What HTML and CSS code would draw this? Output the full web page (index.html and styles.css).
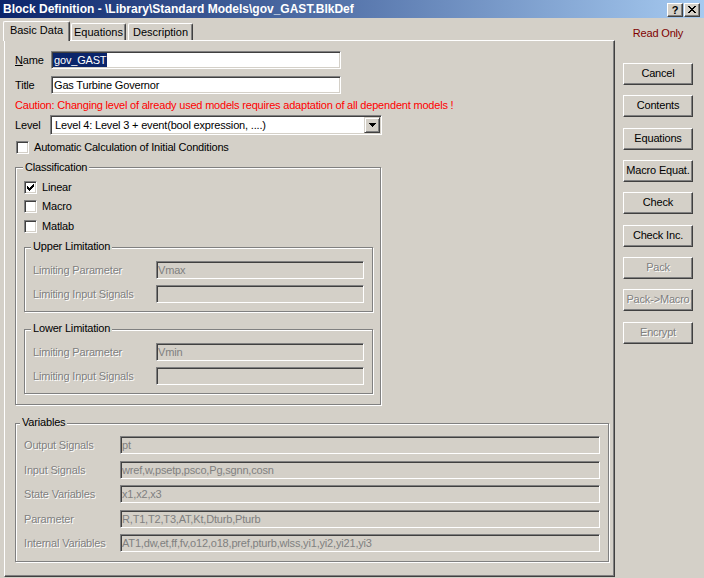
FILE: index.html
```html
<!DOCTYPE html>
<html>
<head>
<meta charset="utf-8">
<title>Block Definition</title>
<link rel="stylesheet" href="styles.css">
</head>
<body>
<div class="window">
  <div class="titlebar">
    <span class="caption">Block Definition - \Library\Standard Models\gov_GAST.BlkDef</span>
    <div class="capbtns">
      <span class="capbtn">?</span>
      <span class="capbtn"><svg width="8" height="7" viewBox="0 0 8 7" shape-rendering="crispEdges"><path fill="#000" d="M0 0h2v1h-2z M6 0h2v1h-2z M1 1h2v1h-2z M5 1h2v1h-2z M2 2h4v1h-4z M3 3h2v1h-2z M2 4h4v1h-4z M1 5h2v1h-2z M5 5h2v1h-2z M0 6h2v1h-2z M6 6h2v1h-2z"/></svg></span>
    </div>
  </div>
  <div class="main">
    <div class="tabarea">
      <div class="tabstrip">
        <div class="tab tab-active">Basic Data</div>
        <div class="tab tab-eq">Equations</div>
        <div class="tab tab-desc">Description</div>
      </div>
      <div class="panel">
        <div class="row">
          <span class="lbl lbl-name"><u>N</u>ame</span>
          <div class="field field-top"><span class="hl">gov_GAST</span></div>
        </div>
        <div class="row row-title">
          <span class="lbl lbl-name">Title</span>
          <div class="field field-top">Gas Turbine Governor</div>
        </div>
        <div class="caution">Caution: Changing level of already used models requires adaptation of all dependent models !</div>
        <div class="row row-level">
          <span class="lbl lbl-level">Level</span>
          <div class="combo">
            <span class="combo-text">Level 4: Level 3 + event(bool expression, ....)</span>
            <span class="combo-btn"><svg width="7" height="4" viewBox="0 0 7 4" shape-rendering="crispEdges"><path fill="#000" d="M0 0h7v1h-7z M1 1h5v1h-5z M2 2h3v1h-3z M3 3h1v1h-1z"/></svg></span>
          </div>
        </div>
        <div class="cbrow cbrow-auto"><span class="cb"></span><span>Automatic Calculation of Initial Conditions</span></div>

        <div class="group group-class">
          <span class="legend">Classification</span>
          <div class="cbrow cbrow-first"><span class="cb"><svg width="7" height="7" viewBox="0 0 7 7" shape-rendering="crispEdges"><path fill="#000" d="M0 2h1v3h-1z M1 3h1v3h-1z M2 4h1v3h-1z M3 3h1v3h-1z M4 2h1v3h-1z M5 1h1v3h-1z M6 0h1v3h-1z"/></svg></span><span>Linear</span></div>
          <div class="cbrow cbrow-mid"><span class="cb"></span><span>Macro</span></div>
          <div class="cbrow cbrow-last"><span class="cb"></span><span>Matlab</span></div>

          <div class="group group-limit">
            <span class="legend legend-limit">Upper Limitation</span>
            <div class="row limrow limrow-first"><span class="lbl dis lbl-lim">Limiting Parameter</span><div class="field field-dis">Vmax</div></div>
            <div class="row limrow"><span class="lbl dis lbl-lim">Limiting Input Signals</span><div class="field field-dis"></div></div>
          </div>

          <div class="group group-limit group-lower">
            <span class="legend legend-limit">Lower Limitation</span>
            <div class="row limrow limrow-first"><span class="lbl dis lbl-lim">Limiting Parameter</span><div class="field field-dis">Vmin</div></div>
            <div class="row limrow"><span class="lbl dis lbl-lim">Limiting Input Signals</span><div class="field field-dis"></div></div>
          </div>
        </div>

        <div class="group group-var">
          <span class="legend legend-var">Variables</span>
          <div class="vrows">
            <div class="row"><span class="lbl dis lbl-var">Output Signals</span><div class="field field-dis">pt</div></div>
            <div class="row"><span class="lbl dis lbl-var">Input Signals</span><div class="field field-dis">wref,w,psetp,psco,Pg,sgnn,cosn</div></div>
            <div class="row"><span class="lbl dis lbl-var">State Variables</span><div class="field field-dis">x1,x2,x3</div></div>
            <div class="row"><span class="lbl dis lbl-var">Parameter</span><div class="field field-dis">R,T1,T2,T3,AT,Kt,Dturb,Pturb</div></div>
            <div class="row"><span class="lbl dis lbl-var">Internal Variables</span><div class="field field-dis">AT1,dw,et,ff,fv,o12,o18,pref,pturb,wlss,yi1,yi2,yi21,yi3</div></div>
          </div>
        </div>
      </div>
    </div>
    <div class="side">
      <div class="readonly">Read Only</div>
      <div class="btns">
        <div class="btn">Cancel</div>
        <div class="btn">Contents</div>
        <div class="btn">Equations</div>
        <div class="btn">Macro Equat.</div>
        <div class="btn">Check</div>
        <div class="btn">Check Inc.</div>
        <div class="btn btn-dis">Pack</div>
        <div class="btn btn-dis">Pack-&gt;Macro</div>
        <div class="btn btn-dis">Encrypt</div>
      </div>
    </div>
  </div>
</div>
</body>
</html>
```
FILE: styles.css
```css
* { box-sizing: border-box; }
html, body { margin: 0; padding: 0; }
body {
  width: 704px;
  height: 578px;
  overflow: hidden;
  background: #D4D0C8;
  font-family: "Liberation Sans", Arial, sans-serif;
  font-size: 11px;
  letter-spacing: -0.18px;
  color: #000;
}
.window {
  width: 704px;
  height: 578px;
  display: flex;
  flex-direction: column;
  background: #D4D0C8;
}

/* title bar */
.titlebar {
  height: 18px;
  flex: none;
  display: flex;
  align-items: center;
  padding: 0 4px 0 3px;
  background: linear-gradient(to right, #0A246A, #A6CAF0);
  color: #fff;
  font-weight: bold;
  font-size: 12px;
  letter-spacing: 0;
  line-height: 18px;
  white-space: nowrap;
}
.capbtns { margin-left: auto; display: flex; gap: 1px; margin-top: 1px; }
.capbtn {
  width: 16px;
  height: 14px;
  background: #D4D0C8;
  border: 1px solid;
  border-color: #fff #404040 #404040 #fff;
  box-shadow: inset -1px -1px #808080;
  display: flex;
  align-items: center;
  justify-content: center;
  color: #000;
  font-size: 11px;
  font-weight: bold;
  line-height: 12px;
}

.main { display: flex; flex: 1; }

/* tabs */
.tabarea { margin-left: 4px; width: 611px; display: flex; flex-direction: column; flex: none; }
.tabstrip { height: 22px; display: flex; align-items: flex-end; flex: none; }
.tab {
  height: 17px;
  border: 1px solid;
  border-bottom: none;
  border-color: #fff #404040 #404040 #fff;
  box-shadow: inset -1px 0 #808080;
  border-radius: 2px 2px 0 0;
  text-align: center;
  line-height: 16px;
  white-space: nowrap;
  letter-spacing: 0;
}
.tab-active {
  position: relative;
  z-index: 1;
  width: 67px;
  height: 20px;
  margin-left: -1px;
  margin-bottom: -1px;
  background: #D4D0C8;
  line-height: 16px;
}
.tab-eq { width: 55px; margin-left: 1px; }
.tab-desc { width: 65px; margin-left: 2px; }

.panel {
  width: 611px;
  height: 537px;
  border: 1px solid;
  border-color: #fff #404040 #404040 #fff;
  box-shadow: inset -1px -1px #808080;
  padding: 10px 0 0 10px;
  display: flex;
  flex-direction: column;
  align-items: flex-start;
}

/* rows & fields */
.row { display: flex; align-items: center; }
.lbl { white-space: nowrap; flex: none; }
.lbl-name { width: 36px; }
.lbl-level { width: 35px; }
.row-title { margin-top: 7px; }
.dis { color: #808080; text-shadow: 1px 1px 0 #fff; }

.field {
  height: 18px;
  background: #fff;
  border: 1px solid;
  border-color: #808080 #fff #fff #808080;
  box-shadow: inset 1px 1px #404040, inset -1px -1px #D4D0C8;
  padding: 0 2px;
  line-height: 16px;
  white-space: nowrap;
  overflow: hidden;
}
.field-top { width: 290px; }
.hl {
  display: inline-block;
  background: #0A246A;
  color: #fff;
  margin-left: -1px;
  padding: 0 1px;
  line-height: 14px;
  vertical-align: top;
  margin-top: 1px;
}
.field-dis {
  flex: 1;
  background: #D4D0C8;
  color: #808080;
  padding: 0 1px;
}

.caution {
  margin-top: 5px;
  color: #FF0000;
  line-height: 13px;
  white-space: nowrap;
  letter-spacing: -0.2px;
}
.row-level { margin-top: 3px; }
.combo {
  width: 332px;
  height: 20px;
  background: #fff;
  border: 1px solid;
  border-color: #808080 #fff #fff #808080;
  box-shadow: inset 1px 1px #404040, inset -1px -1px #D4D0C8;
  padding: 1px;
  display: flex;
  align-items: center;
}
.combo-text { flex: 1; padding-left: 3px; line-height: 16px; white-space: nowrap; }
.combo-btn {
  width: 16px;
  height: 16px;
  background: #D4D0C8;
  border: 1px solid;
  border-color: #D4D0C8 #404040 #404040 #D4D0C8;
  box-shadow: inset 1px 1px #fff, inset -1px -1px #808080;
  display: flex;
  align-items: center;
  justify-content: center;
}

/* checkboxes */
.cbrow { display: flex; align-items: center; line-height: 13px; white-space: nowrap; }
.cb {
  width: 13px;
  height: 13px;
  flex: none;
  background: #fff;
  border: 1px solid;
  border-color: #808080 #fff #fff #808080;
  box-shadow: inset 1px 1px #404040, inset -1px -1px #D4D0C8;
  margin-right: 5px;
  display: flex;
  align-items: center;
  justify-content: center;
}
.cbrow-auto { margin-top: 6px; margin-left: 1px; }
.cbrow-first { margin-top: 8px; }
.cbrow-mid { margin-top: 6px; }
.cbrow-last { margin-top: 7px; }

/* group boxes */
.group {
  border: 1px solid #808080;
  box-shadow: inset 1px 1px #fff, 1px 1px #fff;
  display: flex;
  flex-direction: column;
  align-items: flex-start;
  padding: 0 8px 8px 8px;
  flex: none;
}
.legend {
  background: #D4D0C8;
  line-height: 13px;
  padding: 0 2px;
  margin: -7px 0 0 -1px;
  white-space: nowrap;
}
.group-class { margin-top: 13px; width: 366px; padding-bottom: 10px; padding-right: 7px; }
.group-class > .cbrow-first { margin-top: 7px; }
.group-limit { margin-top: 14px; width: 349px; align-self: flex-start; }
.group-lower { margin-top: 17px; }
.legend-limit { margin-left: -2px; margin-top: -8px; }
.limrow { align-self: stretch; margin-top: 6px; }
.limrow-first { margin-top: 8px; }
.lbl-lim { width: 123px; }

.group-var { margin-top: 18px; width: 594px; padding-bottom: 9px; }
.legend-var { margin-left: -4px; margin-top: -8px; }
.vrows {
  align-self: stretch;
  margin-top: 7px;
  display: grid;
  row-gap: 6.5px;
}
.lbl-var { width: 96px; }

/* side buttons */
.side {
  padding: 9px 0 0 8px;
  display: flex;
  flex-direction: column;
  flex: none;
}
.readonly {
  width: 70px;
  text-align: center;
  color: #800000;
  line-height: 13px;
  white-space: nowrap;
}
.btns {
  margin-top: 23px;
  display: flex;
  flex-direction: column;
  gap: 10.33px;
}
.btn {
  width: 70px;
  height: 22px;
  border: 1px solid;
  border-color: #fff #404040 #404040 #fff;
  box-shadow: inset -1px -1px #808080;
  text-align: center;
  line-height: 19px;
  white-space: nowrap;
  overflow: hidden;
}
.btn-dis { color: #808080; text-shadow: 1px 1px 0 #fff; }
```
